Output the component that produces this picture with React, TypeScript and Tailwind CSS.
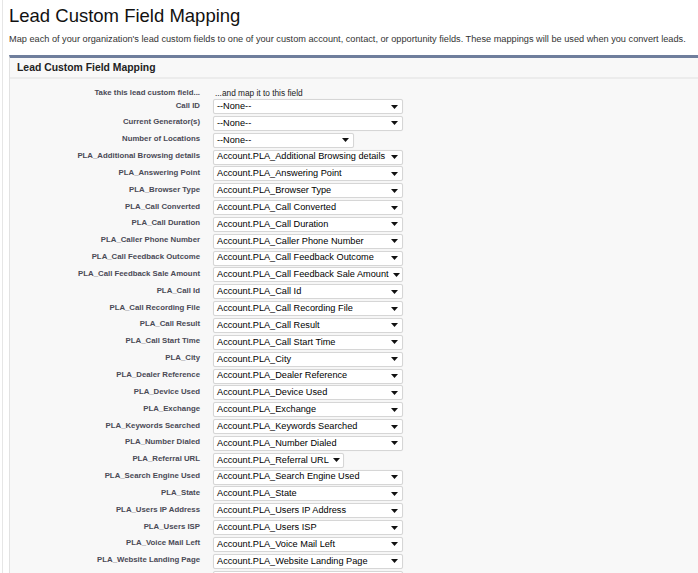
import React from "react";

type Row = { label: string; value: string; width?: string };

const rows: Row[] = [
  { label: "Call ID", value: "--None--" },
  { label: "Current Generator(s)", value: "--None--" },
  { label: "Number of Locations", value: "--None--", width: "w-[141px]" },
  { label: "PLA_Additional Browsing details", value: "Account.PLA_Additional Browsing details" },
  { label: "PLA_Answering Point", value: "Account.PLA_Answering Point" },
  { label: "PLA_Browser Type", value: "Account.PLA_Browser Type" },
  { label: "PLA_Call Converted", value: "Account.PLA_Call Converted" },
  { label: "PLA_Call Duration", value: "Account.PLA_Call Duration" },
  { label: "PLA_Caller Phone Number", value: "Account.PLA_Caller Phone Number" },
  { label: "PLA_Call Feedback Outcome", value: "Account.PLA_Call Feedback Outcome" },
  { label: "PLA_Call Feedback Sale Amount", value: "Account.PLA_Call Feedback Sale Amount" },
  { label: "PLA_Call Id", value: "Account.PLA_Call Id" },
  { label: "PLA_Call Recording File", value: "Account.PLA_Call Recording File" },
  { label: "PLA_Call Result", value: "Account.PLA_Call Result" },
  { label: "PLA_Call Start Time", value: "Account.PLA_Call Start Time" },
  { label: "PLA_City", value: "Account.PLA_City" },
  { label: "PLA_Dealer Reference", value: "Account.PLA_Dealer Reference" },
  { label: "PLA_Device Used", value: "Account.PLA_Device Used" },
  { label: "PLA_Exchange", value: "Account.PLA_Exchange" },
  { label: "PLA_Keywords Searched", value: "Account.PLA_Keywords Searched" },
  { label: "PLA_Number Dialed", value: "Account.PLA_Number Dialed" },
  { label: "PLA_Referral URL", value: "Account.PLA_Referral URL", width: "w-[131px]" },
  { label: "PLA_Search Engine Used", value: "Account.PLA_Search Engine Used" },
  { label: "PLA_State", value: "Account.PLA_State" },
  { label: "PLA_Users IP Address", value: "Account.PLA_Users IP Address" },
  { label: "PLA_Users ISP", value: "Account.PLA_Users ISP" },
  { label: "PLA_Voice Mail Left", value: "Account.PLA_Voice Mail Left" },
  { label: "PLA_Website Landing Page", value: "Account.PLA_Website Landing Page" },
  { label: "Rating", value: "--None--" },
];

function Picklist({ value, width = "w-[190px]" }: { value: string; width?: string }) {
  return (
    <div
      className={`${width} h-[15px] flex items-center justify-between bg-white border border-[#d6d6d6] rounded-[2px] shadow-[0_0_1px_rgba(0,0,0,0.08)] pl-[3px] pr-[4px]`}
    >
      <span className="text-[9.2px] leading-none text-black whitespace-nowrap">{value}</span>
      {/* dropdown arrow */}
      <svg width="7" height="4" viewBox="0 0 7 4" className="shrink-0 ml-[4px]">
        <path d="M0 0h7L3.5 4z" fill="#111" />
      </svg>
    </div>
  );
}

export default function App() {
  return (
    <div className="h-[573px] bg-white font-['Liberation_Sans',Arial,sans-serif] border-l border-[#e6e6e6] ml-[2px] overflow-hidden">
      <div className="pl-[6px]">
        <h1 className="pt-[5px] text-[18.5px] leading-[22px] text-[#111]">Lead Custom Field Mapping</h1>
        <p className="mt-[7px] text-[9.2px] leading-[11px] text-[#333] whitespace-nowrap">
          Map each of your organization's lead custom fields to one of your custom account, contact, or opportunity fields. These mappings will be used when you convert leads.
        </p>

        {/* Panel */}
        <div className="mt-[10px] -mr-[4px] bg-[#f8f8f8] border-t-[3px] border-[#6f7e9c] border-l border-l-[#e2e2e2]">
          <div className="h-[21px] flex items-center pl-[7px] border-b-2 border-[#ececec]">
            <h2 className="text-[10.4px] font-bold text-[#222]">Lead Custom Field Mapping</h2>
          </div>

          <div className="pt-[8px] pb-[4px]">
            <div className="grid grid-cols-[190px_1fr] gap-x-[13px] h-[12px] items-center">
              <div className="text-right text-[7.8px] font-bold text-[#4a4a56] leading-[12px]">
                Take this lead custom field...
              </div>
              <div className="pl-[2px] text-[8.3px] text-[#222] leading-[12px]">...and map it to this field</div>
            </div>

            {rows.map((r) => (
              <div key={r.label} className="grid grid-cols-[190px_1fr] gap-x-[13px] h-[16.85px]">
                <div className="text-right text-[7.8px] font-bold text-[#4a4a56] leading-[12px] pt-[0.5px] whitespace-nowrap">
                  {r.label}
                </div>
                <div>
                  <Picklist value={r.value} width={r.width} />
                </div>
              </div>
            ))}
          </div>
        </div>
      </div>
    </div>
  );
}
